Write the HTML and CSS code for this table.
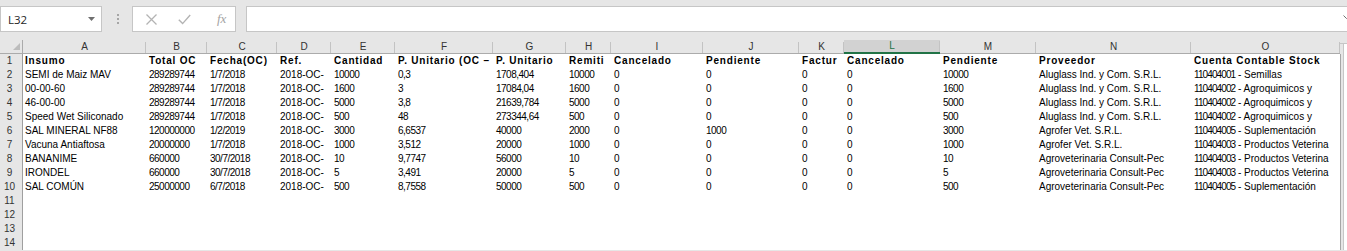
FILE: index.html
```html
<!DOCTYPE html>
<html lang="es">
<head>
<meta charset="utf-8">
<title>Hoja de cálculo</title>
<link rel="stylesheet" href="styles.css">
</head>
<body>
<div class="app">
  <div class="fbar">
    <div class="namebox">
      <span>L32</span>
      <svg class="dd" width="7" height="4" viewBox="0 0 7 4"><path d="M0 0H7L3.5 4Z" fill="#6f6f6f"/></svg>
    </div>
    <div class="grip"><i></i><i></i><i></i></div>
    <div class="fbtns">
      <svg class="ico-x" width="11" height="11" viewBox="0 0 11 11"><path d="M0.5 0.5L10.5 10.5M10.5 0.5L0.5 10.5" stroke="#b3b3b3" stroke-width="1.3" fill="none"/></svg>
      <svg class="ico-ok" width="13" height="11" viewBox="0 0 13 11"><path d="M0.8 5.8L4.6 9.6L12.2 1" stroke="#b3b3b3" stroke-width="1.4" fill="none"/></svg>
      <span class="fx">fx</span>
    </div>
    <div class="finput">
      <svg class="chev" width="7" height="4" viewBox="0 0 7 4"><path d="M0.5 0.5L3.5 3.5L6.5 0.5" stroke="#707070" stroke-width="1" fill="none"/></svg>
    </div>
  </div>

  <div class="sheet">
    <div class="row hdr">
      <div class="corner"><svg width="7" height="7" viewBox="0 0 7 7"><path d="M7 0V7H0Z" fill="#bcbcbc"/></svg></div>
      <div class="ch">A</div><div class="ch">B</div><div class="ch">C</div><div class="ch">D</div><div class="ch">E</div><div class="ch">F</div><div class="ch">G</div><div class="ch">H</div><div class="ch">I</div><div class="ch">J</div><div class="ch">K</div><div class="ch sel">L</div><div class="ch">M</div><div class="ch">N</div><div class="ch">O</div>
      <div class="sbh"></div>
    </div>

    <div class="row r1">
      <div class="rh">1</div>
      <div class="c a">Insumo</div><div class="c">Total OC</div><div class="c">Fecha(OC)</div><div class="c">Ref.</div><div class="c">Cantidad</div><div class="c">P. Unitario (OC –</div><div class="c">P. Unitario</div><div class="c">Remiti</div><div class="c">Cancelado</div><div class="c">Pendiente</div><div class="c">Factur</div><div class="c">Cancelado</div><div class="c">Pendiente</div><div class="c">Proveedor</div><div class="c">Cuenta Contable Stock</div>
      <div class="sb"></div>
    </div>

    <div class="row">
      <div class="rh">2</div>
      <div class="c a">SEMI de Maiz MAV</div><div class="c n">289289744</div><div class="c n">1/7/2018</div><div class="c">2018-OC-</div><div class="c n">10000</div><div class="c n">0,3</div><div class="c n">1708,404</div><div class="c n">10000</div><div class="c n">0</div><div class="c n">0</div><div class="c n">0</div><div class="c n">0</div><div class="c n">10000</div><div class="c">Aluglass Ind. y Com. S.R.L.</div><div class="c o"><span class="acc">110404001</span> - Semillas</div>
      <div class="sb"></div>
    </div>

    <div class="row">
      <div class="rh">3</div>
      <div class="c a">00-00-60</div><div class="c n">289289744</div><div class="c n">1/7/2018</div><div class="c">2018-OC-</div><div class="c n">1600</div><div class="c n">3</div><div class="c n">17084,04</div><div class="c n">1600</div><div class="c n">0</div><div class="c n">0</div><div class="c n">0</div><div class="c n">0</div><div class="c n">1600</div><div class="c">Aluglass Ind. y Com. S.R.L.</div><div class="c o"><span class="acc">110404002</span> - Agroquimicos y</div>
      <div class="sb"></div>
    </div>

    <div class="row">
      <div class="rh">4</div>
      <div class="c a">46-00-00</div><div class="c n">289289744</div><div class="c n">1/7/2018</div><div class="c">2018-OC-</div><div class="c n">5000</div><div class="c n">3,8</div><div class="c n">21639,784</div><div class="c n">5000</div><div class="c n">0</div><div class="c n">0</div><div class="c n">0</div><div class="c n">0</div><div class="c n">5000</div><div class="c">Aluglass Ind. y Com. S.R.L.</div><div class="c o"><span class="acc">110404002</span> - Agroquimicos y</div>
      <div class="sb"></div>
    </div>

    <div class="row">
      <div class="rh">5</div>
      <div class="c a">Speed Wet Siliconado</div><div class="c n">289289744</div><div class="c n">1/7/2018</div><div class="c">2018-OC-</div><div class="c n">500</div><div class="c n">48</div><div class="c n">273344,64</div><div class="c n">500</div><div class="c n">0</div><div class="c n">0</div><div class="c n">0</div><div class="c n">0</div><div class="c n">500</div><div class="c">Aluglass Ind. y Com. S.R.L.</div><div class="c o"><span class="acc">110404002</span> - Agroquimicos y</div>
      <div class="sb"></div>
    </div>

    <div class="row">
      <div class="rh">6</div>
      <div class="c a">SAL MINERAL NF88</div><div class="c n">120000000</div><div class="c n">1/2/2019</div><div class="c">2018-OC-</div><div class="c n">3000</div><div class="c n">6,6537</div><div class="c n">40000</div><div class="c n">2000</div><div class="c n">0</div><div class="c n">1000</div><div class="c n">0</div><div class="c n">0</div><div class="c n">3000</div><div class="c">Agrofer Vet. S.R.L.</div><div class="c o"><span class="acc">110404005</span> - Suplementación</div>
      <div class="sb"></div>
    </div>

    <div class="row">
      <div class="rh">7</div>
      <div class="c a">Vacuna Antiaftosa</div><div class="c n">20000000</div><div class="c n">1/7/2018</div><div class="c">2018-OC-</div><div class="c n">1000</div><div class="c n">3,512</div><div class="c n">20000</div><div class="c n">1000</div><div class="c n">0</div><div class="c n">0</div><div class="c n">0</div><div class="c n">0</div><div class="c n">1000</div><div class="c">Agrofer Vet. S.R.L.</div><div class="c o"><span class="acc">110404003</span> - Productos Veterina</div>
      <div class="sb"></div>
    </div>

    <div class="row">
      <div class="rh">8</div>
      <div class="c a">BANANIME</div><div class="c n">660000</div><div class="c n">30/7/2018</div><div class="c">2018-OC-</div><div class="c n">10</div><div class="c n">9,7747</div><div class="c n">56000</div><div class="c n">10</div><div class="c n">0</div><div class="c n">0</div><div class="c n">0</div><div class="c n">0</div><div class="c n">10</div><div class="c">Agroveterinaria Consult-Pec</div><div class="c o"><span class="acc">110404003</span> - Productos Veterina</div>
      <div class="sb"></div>
    </div>

    <div class="row">
      <div class="rh">9</div>
      <div class="c a">IRONDEL</div><div class="c n">660000</div><div class="c n">30/7/2018</div><div class="c">2018-OC-</div><div class="c n">5</div><div class="c n">3,491</div><div class="c n">20000</div><div class="c n">5</div><div class="c n">0</div><div class="c n">0</div><div class="c n">0</div><div class="c n">0</div><div class="c n">5</div><div class="c">Agroveterinaria Consult-Pec</div><div class="c o"><span class="acc">110404003</span> - Productos Veterina</div>
      <div class="sb"></div>
    </div>

    <div class="row">
      <div class="rh">10</div>
      <div class="c a">SAL COMÚN</div><div class="c n">25000000</div><div class="c n">6/7/2018</div><div class="c">2018-OC-</div><div class="c n">500</div><div class="c n">8,7558</div><div class="c n">50000</div><div class="c n">500</div><div class="c n">0</div><div class="c n">0</div><div class="c n">0</div><div class="c n">0</div><div class="c n">500</div><div class="c">Agroveterinaria Consult-Pec</div><div class="c o"><span class="acc">110404005</span> - Suplementación</div>
      <div class="sb"></div>
    </div>

    <div class="row empty"><div class="rh">11</div><div class="fill"></div><div class="sb"></div></div>
    <div class="row empty"><div class="rh">12</div><div class="fill"></div><div class="sb"></div></div>
    <div class="row empty"><div class="rh">13</div><div class="fill"></div><div class="sb"></div></div>
    <div class="row empty"><div class="rh">14</div><div class="fill"></div><div class="sb"></div></div>
  </div>
</div>
</body>
</html>
```

FILE: styles.css
```css
* {
  box-sizing: border-box;
  margin: 0;
  padding: 0;
}

html,
body {
  width: 1347px;
  height: 251px;
  overflow: hidden;
}

body {
  background: #e6e6e6;
  font-family: "Liberation Sans", Arial, sans-serif;
  color: #000;
}

.app {
  display: flex;
  flex-direction: column;
}

/* ---------- formula bar ---------- */
.fbar {
  height: 40px;
  display: flex;
  align-items: flex-start;
  padding-top: 6px;
}

.namebox {
  width: 102px;
  height: 26px;
  background: #fff;
  border: 1px solid #c6c6c6;
  display: flex;
  align-items: center;
  justify-content: space-between;
  padding: 0 6px 0 7px;
  font-family: "Open Sans", "Liberation Sans", sans-serif;
  font-size: 11.5px;
  color: #262626;
}

.grip {
  width: 30px;
  height: 26px;
  display: flex;
  flex-direction: column;
  align-items: center;
  justify-content: center;
  gap: 2px;
  padding-left: 1px;
}

.grip i {
  display: block;
  width: 2px;
  height: 2px;
  background: #a6a6a6;
}

.fbtns {
  width: 104px;
  height: 26px;
  background: #fff;
  border: 1px solid #c6c6c6;
  display: flex;
  align-items: center;
  padding-left: 13px;
}

.ico-ok {
  margin-left: 21px;
}

.fx {
  margin-left: 26px;
  font-family: "Liberation Serif", serif;
  font-style: italic;
  font-size: 13px;
  color: #a3a3a3;
  line-height: 1;
  margin-top: -2px;
}

.finput {
  flex: 1;
  margin-left: 10px;
  height: 26px;
  background: #fff;
  border: 1px solid #c6c6c6;
  border-right: none;
  display: flex;
  align-items: flex-start;
  justify-content: flex-end;
  padding-top: 8px;
  margin-right: -3px;
}

/* ---------- sheet ---------- */
.sheet {
  --cols: 23px 123px 61px 70px 54px 64px 98px 73px 45px 92px 96px 45px 96px 96px 155px 149px 7px;
  display: flex;
  flex-direction: column;
  background: #fff;
}

.row {
  display: grid;
  grid-template-columns: var(--cols);
  height: 14px;
}

.row.empty {
  grid-template-columns: 23px 1317px 7px;
}

.hdr {
  background: #e6e6e6;
}

.corner,
.ch {
  height: 14px;
  border-bottom: 1px solid #ababab;
  background: #e6e6e6;
}

.corner {
  display: flex;
  align-items: flex-end;
  justify-content: flex-end;
  padding: 0 2px 3px 0;
  border-right: 1px solid #ababab;
}

.ch {
  text-align: center;
  font-size: 10px;
  line-height: 13px;
  color: #333;
  background-image: linear-gradient(#c3c3c3, #c3c3c3);
  background-repeat: no-repeat;
  background-position: right bottom;
  background-size: 1px 11px;
}

.ch.sel {
  background-color: #d2d2d2;
  color: #217346;
  border-bottom: 2px solid #217346;
  line-height: 12px;
}

.sbh {
  height: 14px;
  background:
    linear-gradient(#e6e6e6 0 3px, #c6c6c6 3px 4px, transparent 4px),
    linear-gradient(to right, #e6e6e6 0 3px, #c6c6c6 3px 4px, #fff 4px);
}

.rh {
  background: #e6e6e6;
  border-right: 1px solid #9f9f9f;
  text-align: center;
  padding-right: 3px;
  font-size: 10px;
  line-height: 14px;
  color: #333;
}

.c {
  padding-left: 3px;
  font-size: 10px;
  line-height: 14px;
  white-space: nowrap;
  overflow: hidden;
  background: #fff;
}

.c.a {
  padding-left: 2px;
}

.n {
  letter-spacing: -0.5px;
}

.acc {
  letter-spacing: -0.9px;
}

.r1 .c {
  font-weight: bold;
  letter-spacing: 0.8px;
}

.fill {
  background: #fff;
}

.sb {
  background: linear-gradient(to right, #a6a6a6 0 1px, #e6e6e6 1px 3px, #c6c6c6 3px 4px, #fff 4px);
}
```
